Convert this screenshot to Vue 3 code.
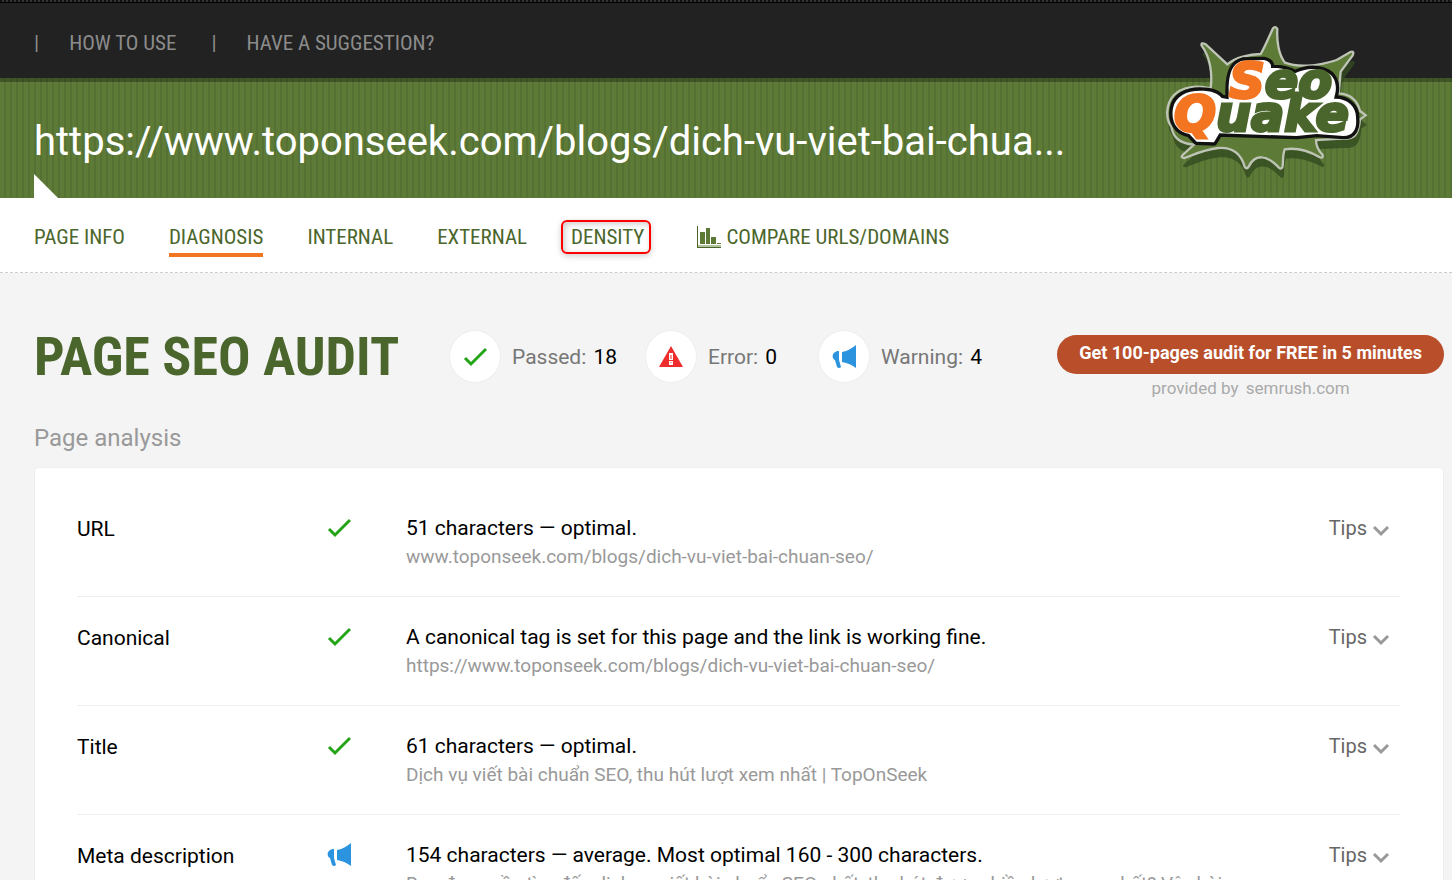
<template>
  <div class="page">
    <header class="top-bar">
      <nav class="top-nav" aria-label="Help">
        <a v-for="link in helpLinks" :key="link" class="top-link" href="#">{{ link }}</a>
      </nav>
    </header>

    <div class="banner">
      <h2 class="banner-url">{{ pageUrl }}</h2>
      <a class="logo" href="#" aria-label="SeoQuake">
        <svg width="230" height="180" viewBox="0 0 690 540">
          <path class="burst-shadow" transform="translate(4 28)" :d="burstPath" />
          <path class="burst" :d="burstPath" />
          <path class="plate" :d="platePath" />
          <text x="238" y="265" class="word"><tspan class="initial">S</tspan>eo</text>
          <text x="72" y="363" class="word"><tspan class="initial">Q</tspan>uake</text>
        </svg>
      </a>
    </div>

    <nav class="tabs" aria-label="Report sections">
      <a
        v-for="tab in tabs"
        :key="tab.label"
        href="#"
        class="tab"
        :class="{ 'is-active': tab.active, 'is-marked': tab.marked, 'has-icon': tab.icon }"
      >
        <svg v-if="tab.icon" class="tab-icon" width="24" height="22" viewBox="0 0 24 22" aria-hidden="true">
          <path fill="#4b662c" d="M0 0h1v21h23v1H0z" />
          <path fill="#5d7936" d="M3 6h5v12H3zM9 2h4v16H9zM14 11h5v7h-5zM20 17h4v1h-4z" />
          <path fill="#b2c49c" d="M1 19h23v2H1z" />
        </svg>
        {{ tab.label }}
      </a>
    </nav>

    <main class="content">
      <section class="summary">
        <h1 class="title">PAGE SEO AUDIT</h1>
        <ul class="stats">
          <li v-for="stat in stats" :key="stat.label" class="stat" :class="`stat-${stat.type}`">
            <span class="stat-badge">
              <svg width="24" height="24" viewBox="0 0 24 24" aria-hidden="true">
                <path v-if="stat.type === 'passed'" class="icon-check" :d="checkPath" />
                <template v-else-if="stat.type === 'error'">
                  <path fill="#ef2d2d" d="M12 1L24 22H0z" />
                  <path fill="#fff" d="M10 8h4v7h-4zM10 16h4v4h-4z" />
                  <path fill="#ef2d2d" d="M11.500 10h1v4h-1zM11.500 17h1v1h-1z" />
                </template>
                <path v-else class="icon-horn" :d="hornPath" />
              </svg>
            </span>
            <span class="stat-label">{{ stat.label }}: <b class="stat-value">{{ stat.value }}</b></span>
          </li>
        </ul>
        <div class="promo">
          <button type="button" class="promo-button">Get 100-pages audit for FREE in 5 minutes</button>
          <p class="promo-note">provided by <a href="#">semrush.com</a></p>
        </div>
      </section>

      <h3 class="section-title">Page analysis</h3>

      <ul class="report">
        <li v-for="row in rows" :key="row.name" class="row">
          <span class="row-name">{{ row.name }}</span>
          <svg class="row-icon" width="24" height="24" viewBox="0 0 24 24" aria-hidden="true">
            <path v-if="row.passed" class="icon-check" :d="checkPath" />
            <path v-else class="icon-horn" :d="hornPath" />
          </svg>
          <div class="row-body">
            <p class="row-result">{{ row.result }}</p>
            <p class="row-detail">{{ row.detail }}</p>
          </div>
          <button type="button" class="tips">
            Tips
            <svg class="tips-arrow" width="18" height="12" viewBox="0 0 18 12" aria-hidden="true">
              <path d="M2 2l7 7 7-7" fill="none" stroke="#999" stroke-width="3" />
            </svg>
          </button>
        </li>
      </ul>
    </main>
  </div>
</template>

<script setup>
const pageUrl = 'https://www.toponseek.com/blogs/dich-vu-viet-bai-chua...'

const helpLinks = ['HOW TO USE', 'HAVE A SUGGESTION?']

const tabs = [
  { label: 'PAGE INFO' },
  { label: 'DIAGNOSIS', active: true },
  { label: 'INTERNAL' },
  { label: 'EXTERNAL' },
  { label: 'DENSITY', marked: true },
  { label: 'COMPARE URLS/DOMAINS', icon: true }
]

const stats = [
  { type: 'passed', label: 'Passed', value: 18 },
  { type: 'error', label: 'Error', value: 0 },
  { type: 'warning', label: 'Warning', value: 4 }
]

const rows = [
  {
    name: 'URL',
    passed: true,
    result: '51 characters — optimal.',
    detail: 'www.toponseek.com/blogs/dich-vu-viet-bai-chuan-seo/'
  },
  {
    name: 'Canonical',
    passed: true,
    result: 'A canonical tag is set for this page and the link is working fine.',
    detail: 'https://www.toponseek.com/blogs/dich-vu-viet-bai-chuan-seo/'
  },
  {
    name: 'Title',
    passed: true,
    result: '61 characters — optimal.',
    detail: 'Dịch vụ viết bài chuẩn SEO, thu hút lượt xem nhất | TopOnSeek'
  },
  {
    name: 'Meta description',
    passed: false,
    result: '154 characters — average. Most optimal 160 - 300 characters.',
    detail: 'Bạn đang cần tìm đến dịch vụ viết bài chuẩn SEO nhất, thu hút được nhiều lượt xem nhất? Vậy bài'
  }
]

const checkPath = 'M2 13l6 6L23 4'
const hornPath = 'M24 0v23c-4-3-8-5-14-6V7c6-1 10-4 14-7zM7 6v9l2 7q-2 2-4 0L3 15C-1 13 0 6 7 6z'

const burstPath =
  'M182 235C188 190 180 140 155 107Q152 96 166 102L232 163C255 142 300 132 332 132' +
  'C345 110 355 85 368 57Q375 46 382 57C380 90 385 135 405 158C440 172 500 170 560 150' +
  'L601 126Q614 122 608 136L572 185L566 250C600 252 622 270 630 303L647 316L630 328' +
  'C625 375 615 388 575 386L498 390C498 410 508 425 518 435Q520 447 508 441' +
  'C480 425 440 412 404 418C396 440 401 460 397 472Q392 480 384 470C350 435 315 430 296 470' +
  'Q290 480 284 470C270 420 235 412 205 414C165 418 135 432 104 444Q90 443 98 435L132 404' +
  'C90 400 70 385 64 350C45 325 48 280 72 255C95 230 140 225 182 235Z'

const platePath =
  'M236 240C236 195 245 160 278 152L342 150Q365 155 363 174C400 173 420 180 435 190' +
  'C460 178 490 172 520 182C552 192 562 220 556 250L552 266C592 264 620 290 618 325' +
  'C621 350 614 378 580 378L500 372L440 378L208 370L192 397L140 395L118 372' +
  'C80 365 62 335 69 295C76 258 110 242 150 242C185 242 205 250 215 264L236 268Z'
</script>

<style>
html {
  scrollbar-width: none;
}

body {
  margin: 0;
  background: #f4f4f4;
}
</style>

<style scoped>
.page {
  font-family: Roboto, "Noto Sans", sans-serif;
  font-size: 21px;
  line-height: 28px;
  color: #000;
}

.page * {
  box-sizing: border-box;
}

ul,
p,
h1,
h2,
h3 {
  margin: 0;
  padding: 0;
  list-style: none;
  font-weight: 400;
}

a {
  color: inherit;
  text-decoration: none;
}

button {
  padding: 0;
  border: 0;
  background: none;
  font: inherit;
  cursor: pointer;
}

.top-bar {
  height: 78px;
  padding: 29px 34px 0;
  background:
    repeating-linear-gradient(90deg, #111 0 2px, #333 2px 4px) top / 100% 2px no-repeat,
    linear-gradient(#000, #000) 0 2px / 100% 1px no-repeat,
    #222;
}

.top-nav,
.tabs,
.title {
  font-family: "Roboto Condensed", "Liberation Sans Narrow", sans-serif;
}

.top-nav {
  display: flex;
  gap: 35px;
  color: #8c8c8c;
}

.top-link::before {
  content: "|";
  margin-right: 30px;
}

.banner {
  position: relative;
  height: 120px;
  padding: 0 34px;
  background:
    linear-gradient(rgba(0, 0, 0, 0.3), rgba(0, 0, 0, 0.3)) top / 100% 4px no-repeat,
    repeating-linear-gradient(90deg, #5d7a37 0 4px, #557133 4px 6px);
}

.banner::after {
  content: "";
  position: absolute;
  left: 34px;
  bottom: 0;
  border-top: 24px solid transparent;
  border-left: 24px solid #fff;
}

.banner-url {
  width: 1034px;
  max-width: 100%;
  padding-top: 40px;
  font-size: 40px;
  line-height: 48px;
  color: #fff;
  white-space: nowrap;
  overflow: hidden;
}

.logo {
  position: absolute;
  top: -68px;
  right: 72px;
}

.logo svg {
  display: block;
}

.burst {
  fill: #5d7a37;
  stroke: #bec5b6;
  stroke-width: 7;
}

.burst-shadow {
  fill: #354c20;
  opacity: 0.8;
}

.plate {
  fill: #fff;
  stroke: #111;
  stroke-width: 20;
  stroke-linejoin: round;
  paint-order: stroke;
}

.word {
  font-family: "DejaVu Sans", sans-serif;
  font-size: 148px;
  font-weight: 700;
  font-style: italic;
  fill: #4b662c;
  stroke: #4b662c;
  stroke-width: 9;
}

.initial {
  fill: #f47521;
  stroke: #f47521;
}

.tabs {
  display: flex;
  align-items: flex-start;
  gap: 44px;
  height: 75px;
  padding: 25px 34px 0;
  background: #fff;
  border-bottom: 1px dashed #ccc;
  color: #4b662c;
}

.tab {
  display: flex;
  align-items: center;
  gap: 5px;
  height: 34px;
  padding-bottom: 6px;
  white-space: nowrap;
}

.tab.is-active {
  border-bottom: 4px solid #f47521;
  padding-bottom: 2px;
}

.tab.is-marked {
  position: relative;
}

.tab.is-marked::before {
  content: "";
  position: absolute;
  inset: -3px -7px 3px -10px;
  border: 2px solid #f00;
  border-radius: 6px;
  box-shadow: 0 2px 6px rgba(0, 0, 0, 0.2), inset 2px 2px 6px rgba(0, 0, 0, 0.2);
}

.tab.has-icon {
  margin-left: 9px;
}

.content {
  padding: 57px 8px 0 34px;
}

.summary {
  display: flex;
  align-items: flex-start;
  height: 93px;
}

.title {
  width: 415px;
  flex-shrink: 0;
  font-size: 54px;
  line-height: 54px;
  font-weight: 700;
  color: #4b662c;
  white-space: nowrap;
}

.stats {
  display: flex;
  color: #777;
}

.stat {
  display: flex;
  align-items: center;
  gap: 11px;
  width: 173px;
  white-space: nowrap;
}

.stat-passed {
  width: 196px;
}

.stat-badge {
  display: grid;
  place-items: center;
  width: 52px;
  height: 53px;
  border: 1px solid #eee;
  border-radius: 50%;
  background: #fff;
}

.stat-value {
  margin-left: 2px;
  font-weight: 400;
  color: #000;
}

.icon-check {
  fill: none;
  stroke: #25a316;
  stroke-width: 3;
}

.icon-horn {
  fill: #2c93df;
}

.promo {
  margin: 5px 0 0 auto;
  text-align: center;
}

.promo-button {
  display: block;
  height: 39px;
  padding: 0 22px 4px;
  border-radius: 20px;
  background: #b94e2b;
  color: #fff;
  font-size: 18px;
  font-weight: 700;
  white-space: nowrap;
}

.promo-note {
  font-size: 17px;
  color: #aaa;
}

.promo-note a {
  margin-left: 3px;
}

.section-title {
  padding-bottom: 14px;
  font-size: 24px;
  line-height: 30px;
  color: #999;
}

.report {
  padding: 20px 43px 0 42px;
  border: 1px solid #eee;
  border-radius: 4px;
  background: #fff;
}

.row {
  display: grid;
  grid-template-columns: 250px 79px 1fr auto;
  align-items: start;
  min-height: 109px;
  padding-top: 26px;
  border-bottom: 1px solid #eee;
}

.row-name {
  padding-top: 1px;
}

.row-icon {
  margin-top: 2px;
}

.row-result {
  line-height: 29px;
}

.row-detail {
  font-size: 19px;
  color: #999;
}

.tips {
  display: flex;
  align-items: center;
  gap: 5px;
  padding: 0 10px 0 0;
  font-size: 20px;
  color: #666;
}

.tips-arrow {
  margin-top: 6px;
}
</style>
